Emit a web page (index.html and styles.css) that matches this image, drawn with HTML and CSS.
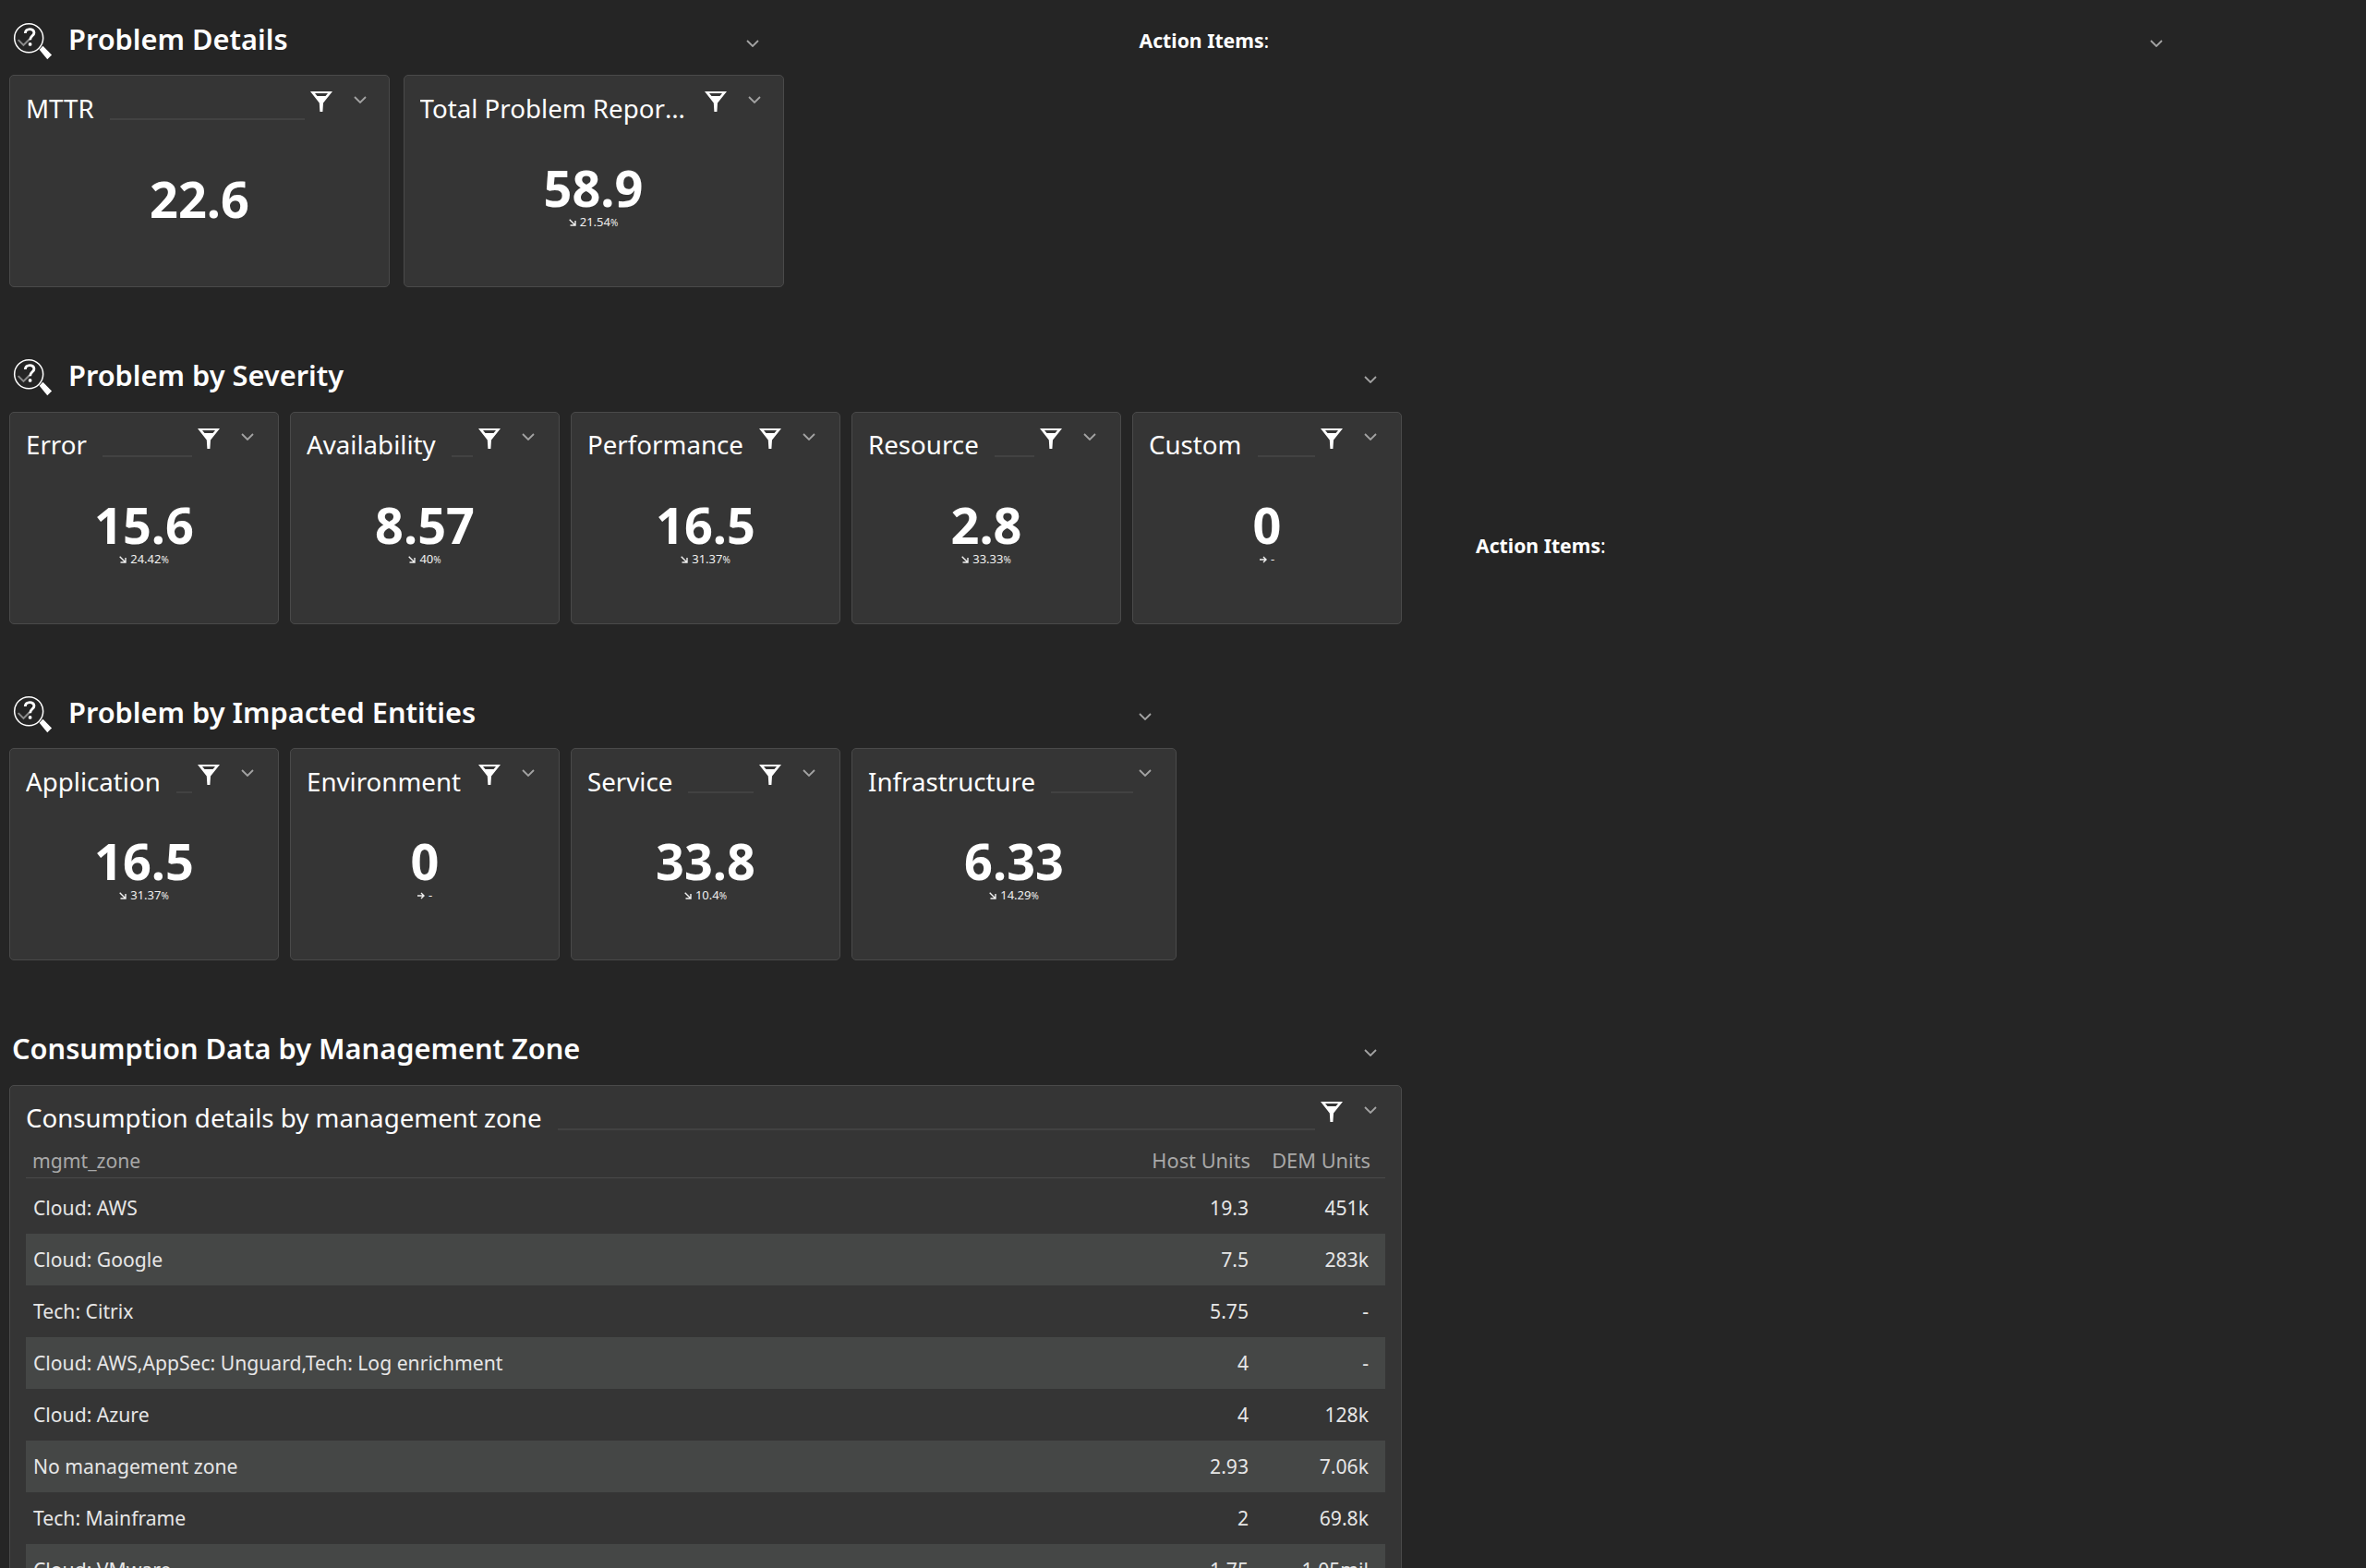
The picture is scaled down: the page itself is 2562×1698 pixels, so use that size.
FILE: index.html
```html
<!DOCTYPE html>
<html lang="en">
<head>
    <meta charset="UTF-8">
    <meta name="viewport" content="width=device-width, initial-scale=1.0">
    <title>Problem Details</title>
    <link rel="stylesheet" href="styles.css">
</head>
<body>
    <svg class="sprites" width="0" height="0">
        <symbol id="filter" viewBox="0 0 24 22">
            <path d="M0 0H24L14 12.5L13.4 22H10.4L9.8 12.5Z M5 2L7.5 5H16.5L19 2Z" fill="#fff" fill-rule="evenodd"/>
        </symbol>
        <symbol id="chevron" viewBox="0 0 14 8">
            <path d="M1 1L7 7L13 1" fill="none" stroke="currentColor" stroke-width="1.8"/>
        </symbol>
        <symbol id="problem" viewBox="0 0 46 46">
            <circle cx="19" cy="18" r="16.2" fill="none" stroke="#fff" stroke-width="1.6"/>
            <path d="M7 20L13 26L20 19" fill="none" stroke="#8c8c8c" stroke-width="2.2"/>
            <path d="M15 12.5C15 6.5 25 6.5 25 12C25 15.5 20.5 15.5 20.5 20" fill="none" stroke="#fff" stroke-width="3"/>
            <circle cx="20.5" cy="25" r="2" fill="#fff"/>
            <path d="M31 31L35 27L45 37L40 42Z" fill="#fff"/>
        </symbol>
        <symbol id="down" viewBox="0 0 8 8">
            <path d="M0.7 0.7L6.5 6.5M7 2V7H1.5" fill="none" stroke="currentColor" stroke-width="1.4"/>
        </symbol>
        <symbol id="flat" viewBox="0 0 8 8">
            <path d="M0 4H7M4 1L7 4L4 7" fill="none" stroke="currentColor" stroke-width="1.4"/>
        </symbol>
    </svg>

    <main class="dashboard">
        <div class="row">
            <section class="section">
                <header class="section-head">
                    <svg class="problem-icon"><use href="#problem"/></svg>
                    <h2>Problem Details</h2>
                    <svg class="chevron"><use href="#chevron"/></svg>
                </header>
                <div class="cards cards-wide">
                    <article class="card card-wide">
                        <div class="card-head">
                            <h3>MTTR</h3><span class="line"></span>
                            <svg class="filter"><use href="#filter"/></svg>
                            <svg class="chevron"><use href="#chevron"/></svg>
                        </div>
                        <div class="value no-delta">22.6</div>
                    </article>
                    <article class="card card-wide">
                        <div class="card-head">
                            <h3>Total Problem Reports (Last 24h)</h3>
                            <svg class="filter"><use href="#filter"/></svg>
                            <svg class="chevron"><use href="#chevron"/></svg>
                        </div>
                        <div class="value">58.9</div>
                        <div class="delta"><svg class="arrow"><use href="#down"/></svg>21.54<small>%</small></div>
                    </article>
                </div>
            </section>
            <aside class="note note-top">
                <span><strong>Action Items</strong>:</span>
                <svg class="chevron"><use href="#chevron"/></svg>
            </aside>
        </div>

        <div class="row">
            <section class="section">
                <header class="section-head">
                    <svg class="problem-icon"><use href="#problem"/></svg>
                    <h2>Problem by Severity</h2>
                    <svg class="chevron"><use href="#chevron"/></svg>
                </header>
                <div class="cards">
                    <article class="card">
                        <div class="card-head">
                            <h3>Error</h3><span class="line"></span>
                            <svg class="filter"><use href="#filter"/></svg>
                            <svg class="chevron"><use href="#chevron"/></svg>
                        </div>
                        <div class="value">15.6</div>
                        <div class="delta"><svg class="arrow"><use href="#down"/></svg>24.42<small>%</small></div>
                    </article>
                    <article class="card">
                        <div class="card-head">
                            <h3>Availability</h3><span class="line"></span>
                            <svg class="filter"><use href="#filter"/></svg>
                            <svg class="chevron"><use href="#chevron"/></svg>
                        </div>
                        <div class="value">8.57</div>
                        <div class="delta"><svg class="arrow"><use href="#down"/></svg>40<small>%</small></div>
                    </article>
                    <article class="card">
                        <div class="card-head">
                            <h3>Performance</h3><span class="line"></span>
                            <svg class="filter"><use href="#filter"/></svg>
                            <svg class="chevron"><use href="#chevron"/></svg>
                        </div>
                        <div class="value">16.5</div>
                        <div class="delta"><svg class="arrow"><use href="#down"/></svg>31.37<small>%</small></div>
                    </article>
                    <article class="card">
                        <div class="card-head">
                            <h3>Resource</h3><span class="line"></span>
                            <svg class="filter"><use href="#filter"/></svg>
                            <svg class="chevron"><use href="#chevron"/></svg>
                        </div>
                        <div class="value">2.8</div>
                        <div class="delta"><svg class="arrow"><use href="#down"/></svg>33.33<small>%</small></div>
                    </article>
                    <article class="card">
                        <div class="card-head">
                            <h3>Custom</h3><span class="line"></span>
                            <svg class="filter"><use href="#filter"/></svg>
                            <svg class="chevron"><use href="#chevron"/></svg>
                        </div>
                        <div class="value">0</div>
                        <div class="delta"><svg class="arrow"><use href="#flat"/></svg>-</div>
                    </article>
                </div>
            </section>
            <aside class="note note-middle">
                <span><strong>Action Items</strong>:</span>
            </aside>
        </div>

        <div class="row">
            <section class="section">
                <header class="section-head">
                    <svg class="problem-icon"><use href="#problem"/></svg>
                    <h2>Problem by Impacted Entities</h2>
                    <svg class="chevron"><use href="#chevron"/></svg>
                </header>
                <div class="cards">
                    <article class="card">
                        <div class="card-head">
                            <h3>Application</h3><span class="line"></span>
                            <svg class="filter"><use href="#filter"/></svg>
                            <svg class="chevron"><use href="#chevron"/></svg>
                        </div>
                        <div class="value">16.5</div>
                        <div class="delta"><svg class="arrow"><use href="#down"/></svg>31.37<small>%</small></div>
                    </article>
                    <article class="card">
                        <div class="card-head">
                            <h3>Environment</h3><span class="line"></span>
                            <svg class="filter"><use href="#filter"/></svg>
                            <svg class="chevron"><use href="#chevron"/></svg>
                        </div>
                        <div class="value">0</div>
                        <div class="delta"><svg class="arrow"><use href="#flat"/></svg>-</div>
                    </article>
                    <article class="card">
                        <div class="card-head">
                            <h3>Service</h3><span class="line"></span>
                            <svg class="filter"><use href="#filter"/></svg>
                            <svg class="chevron"><use href="#chevron"/></svg>
                        </div>
                        <div class="value">33.8</div>
                        <div class="delta"><svg class="arrow"><use href="#down"/></svg>10.4<small>%</small></div>
                    </article>
                    <article class="card card-infra">
                        <div class="card-head">
                            <h3>Infrastructure</h3><span class="line"></span>
                            <svg class="chevron"><use href="#chevron"/></svg>
                        </div>
                        <div class="value">6.33</div>
                        <div class="delta"><svg class="arrow"><use href="#down"/></svg>14.29<small>%</small></div>
                    </article>
                </div>
            </section>
        </div>

        <div class="row">
            <section class="section section-full">
                <header class="section-head">
                    <h2>Consumption Data by Management Zone</h2>
                    <svg class="chevron"><use href="#chevron"/></svg>
                </header>
                <article class="card card-table">
                    <div class="card-head">
                        <h3>Consumption details by management zone</h3><span class="line"></span>
                        <svg class="filter"><use href="#filter"/></svg>
                        <svg class="chevron"><use href="#chevron"/></svg>
                    </div>
                    <table class="zones">
                        <thead>
                            <tr>
                                <th>mgmt_zone</th>
                                <th class="num">Host Units</th>
                                <th class="num">DEM Units</th>
                            </tr>
                        </thead>
                        <tbody>
                            <tr><td>Cloud: AWS</td><td class="num">19.3</td><td class="num">451k</td></tr>
                            <tr><td>Cloud: Google</td><td class="num">7.5</td><td class="num">283k</td></tr>
                            <tr><td>Tech: Citrix</td><td class="num">5.75</td><td class="num">-</td></tr>
                            <tr><td>Cloud: AWS,AppSec: Unguard,Tech: Log enrichment</td><td class="num">4</td><td class="num">-</td></tr>
                            <tr><td>Cloud: Azure</td><td class="num">4</td><td class="num">128k</td></tr>
                            <tr><td>No management zone</td><td class="num">2.93</td><td class="num">7.06k</td></tr>
                            <tr><td>Tech: Mainframe</td><td class="num">2</td><td class="num">69.8k</td></tr>
                            <tr><td>Cloud: VMware</td><td class="num">1.75</td><td class="num">1.05mil</td></tr>
                        </tbody>
                    </table>
                </article>
            </section>
        </div>
    </main>
</body>
</html>
```

FILE: styles.css
```css
html, body {
    height: 100%;
    overflow: hidden;
}

body {
    margin: 0;
    background-color: #252525;
    color: #fff;
    font-family: "Noto Sans", "Open Sans", sans-serif;
}

.sprites {
    position: absolute;
}

.dashboard {
    padding: 16px 0 0 10px;
}

.row {
    display: flex;
    height: 364.6px;
}

.section-head {
    display: flex;
    align-items: center;
    height: 65px;
    box-sizing: border-box;
    padding: 0 27px 14px 3px;
}

.section-head h2 {
    margin: 0;
    font-size: 30.75px;
    font-weight: 600;
    line-height: 40px;
}

.section-head .chevron {
    margin-left: auto;
    margin-top: 10px;
}

.section-full {
    width: 1508px;
}

.problem-icon {
    width: 44px;
    height: 44px;
    margin-right: 17px;
    margin-top: 8px;
}

.chevron {
    width: 14px;
    height: 8px;
    flex: none;
    color: #a3a3a3;
}

.filter {
    width: 24px;
    height: 22px;
    flex: none;
}

.cards {
    display: flex;
    gap: 12px;
}

.cards-wide {
    gap: 14.5px;
}

.card {
    width: 292px;
    height: 230px;
    box-sizing: border-box;
    background-color: #353535;
    border: 1px solid #4a4a4a;
    border-radius: 5px;
    padding: 0 17px;
    text-align: center;
}

.card-wide {
    width: 412px;
}

.card-infra {
    width: 352px;
}

.card-table {
    height: 530px;
    width: 1508px;
    overflow: hidden;
}

.card-head {
    display: flex;
    align-items: flex-start;
    height: 71px;
}

.card-table .card-head {
    height: 62px;
}

.card-head h3 {
    margin: 15.5px 0 0;
    font-size: 27.7px;
    font-weight: 400;
    line-height: 38px;
    white-space: nowrap;
    overflow: hidden;
    text-overflow: ellipsis;
    min-width: 0;
}

/* the rule under a title gives way to long titles, so its inset is drawn in the background */
.line {
    flex: 1 0 12px;
    height: 2px;
    margin-top: 46px;
    background: linear-gradient(#424242, #424242) no-repeat 17px 0 / calc(100% - 23px) 2px;
}

.card-head .filter {
    margin-top: 17px;
    margin-left: auto;
}

.card-head .chevron {
    margin: 22px 9.5px 0 23px;
}

.card-wide .card-head .chevron {
    margin-right: 7px;
}

.line + .chevron {
    margin-left: 0;
}

.card-head h3 + .filter {
    margin-left: 12px;
}

.value {
    margin-top: 20px;
    font-size: 54px;
    font-weight: 700;
    line-height: 60px;
}

.no-delta {
    margin-top: 32px;
}

.delta {
    font-size: 13px;
    line-height: 16px;
    margin-top: -1px;
    color: #f0f0f0;
}

.delta small {
    font-size: 10px;
}

.arrow {
    width: 8px;
    height: 8px;
    margin-right: 4px;
}

.note {
    display: flex;
    font-size: 21.2px;
}

.note strong {
    font-weight: 700;
}

.note-top {
    margin-left: 385px;
    width: 1108px;
    height: 54px;
    align-items: center;
}

.note-top .chevron {
    margin-left: auto;
    margin-top: 8px;
}

.note-middle {
    margin-left: 80px;
    margin-top: 195px;
    height: 30px;
}

.zones {
    width: 100%;
    border-collapse: collapse;
    font-size: 21.15px;
}

.zones th {
    height: 37px;
    font-weight: 400;
    color: #a8a8a8;
    text-align: left;
    padding: 0 0 0 7px;
    border-bottom: 1px solid #4a4a4a;
}

.zones td {
    height: 56px;
    padding: 0 0 0 8px;
    text-align: left;
    color: #e6e6e6;
}

.zones tbody tr:first-child td {
    padding-top: 4px;
}

.zones .num {
    width: 112px;
    text-align: right;
    padding: 0 18px 0 0;
}

.zones th.num {
    padding-right: 16px;
    font-size: 21.8px;
}

.zones tbody tr:nth-child(even) {
    background-color: #454746;
}
```
